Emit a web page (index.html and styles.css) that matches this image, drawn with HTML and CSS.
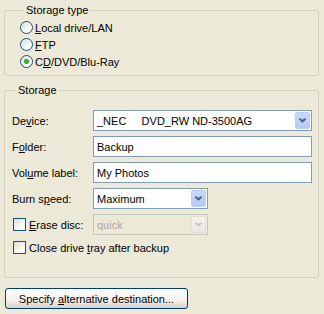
FILE: index.html
```html
<!DOCTYPE html>
<html lang="en">
<head>
  <meta charset="UTF-8" />
  <title>Backup destination</title>
  <link rel="stylesheet" href="styles.css">
</head>
<body>

  <fieldset class="group group-type">
    <legend>Storage type</legend>
    <label class="radio-row"><input type="radio" name="type" class="radio"/><span><u>L</u>ocal drive/LAN</span></label>
    <label class="radio-row"><input type="radio" name="type" class="radio"/><span><u>F</u>TP</span></label>
    <label class="radio-row"><input type="radio" name="type" class="radio" checked/><span>C<u>D</u>/DVD/Blu-Ray</span></label>
  </fieldset>

  <fieldset class="group group-storage">
    <legend>Storage</legend>
    <div class="form">
      <span class="label">De<u>v</u>ice:</span>
      <div class="combo">
        <span class="value">_NEC&nbsp;&nbsp;&nbsp;&nbsp; DVD_RW ND-3500AG</span>
        <span class="drop">
          <svg width="7" height="5" viewBox="0 0 7 5"><path d="M0 0.5h2l1.5 1.5 1.5-1.5h2v1l-3 3h-1l-3-3z" fill="#4d6185"/></svg>
        </span>
      </div>

      <span class="label">F<u>o</u>lder:</span>
      <input type="text" class="field" value="Backup"/>

      <span class="label">Vol<u>u</u>me label:</span>
      <input type="text" class="field" value="My Photos"/>

      <span class="label">Burn s<u>p</u>eed:</span>
      <div class="combo combo-short">
        <span class="value">Maximum</span>
        <span class="drop">
          <svg width="7" height="5" viewBox="0 0 7 5"><path d="M0 0.5h2l1.5 1.5 1.5-1.5h2v1l-3 3h-1l-3-3z" fill="#4d6185"/></svg>
        </span>
      </div>

      <label class="check-row"><input type="checkbox" class="check"/><span><u>E</u>rase disc:</span></label>
      <div class="combo combo-short disabled">
        <span class="value">quick</span>
        <span class="drop">
          <svg width="7" height="5" viewBox="0 0 7 5"><path d="M0 0.5h2l1.5 1.5 1.5-1.5h2v1l-3 3h-1l-3-3z" fill="#c9c7ba"/></svg>
        </span>
      </div>
    </div>

    <label class="check-row tray"><input type="checkbox" class="check"/><span>Close drive <u>t</u>ray after backup</span></label>
  </fieldset>

  <button class="btn">Specify <u>a</u>lternative destination...</button>

</body>
</html>
```

FILE: styles.css
```css
body {
  margin: 0;
  padding-top: 4px;
  background: #ece9d8;
  font-family: "Liberation Sans", Arial, sans-serif;
  font-size: 11px;
  color: #000;
}

u {
  text-decoration-thickness: 1px;
  text-underline-offset: 1px;
}

.group {
  margin: 0 5px 0 4px;
  padding: 0;
  border: 1px solid #d0d0bf;
  border-radius: 3px;
  min-width: 0;
}

.group legend {
  margin-left: 4px;
  padding: 0 2px;
  line-height: 13px;
}

.group-type {
  padding: 2px 6px 5px 15px;
}

.group-storage {
  margin-top: 8px;
  padding: 13px 6px 21px 7px;
}

.radio-row,
.check-row {
  display: flex;
  align-items: center;
  height: 17px;
}

.radio,
.check {
  appearance: none;
  margin: 0 3px 0 0;
  width: 13px;
  height: 13px;
  border: 1px solid #1c5180;
  background: linear-gradient(135deg, #dcdcd7, #fbfbf9 70%, #fff);
  flex: none;
}

.radio {
  margin-right: 2px;
  border-radius: 50%;
  border-color: #1c5180;
}

.radio:checked {
  background: radial-gradient(circle, #4ed24e 0, #21a121 2px, transparent 3px),
              linear-gradient(135deg, #dcdcd7, #fbfbf9 70%, #fff);
}

.check {
  margin-left: 1px;
}

.form {
  display: grid;
  grid-template-columns: 81px 1fr;
  row-gap: 5px;
  align-items: center;
}

.field,
.combo {
  box-sizing: border-box;
  height: 21px;
  border: 1px solid #7f9db9;
  background: #fff;
  font: inherit;
  margin: 0;
  padding: 0 3px;
  width: 100%;
}

.combo {
  display: flex;
  align-items: center;
  justify-content: space-between;
  padding-right: 1px;
}

.combo-short {
  width: 115px;
}

.drop {
  display: flex;
  align-items: center;
  justify-content: center;
  width: 15px;
  height: 17px;
  border-radius: 2px;
  background: linear-gradient(#c8d9fd, #b5c9f5);
  border: 1px solid #bacdf8;
  box-sizing: border-box;
}

.combo.disabled {
  border-color: #c9c7ba;
  background: #ece9d8;
  color: #aca899;
}

.combo.disabled .drop {
  background: linear-gradient(#f4f3ee, #e7e6df);
  border-color: #e2e0d6;
}

.tray {
  margin-top: 4px;
}

.btn {
  margin: 10px 0 0 5px;
  width: 183px;
  height: 21px;
  border: 1px solid #003c74;
  border-radius: 3px;
  background: linear-gradient(#fff, #f3f2ed 60%, #d6d0c5);
  font: inherit;
  color: #000;
  padding: 0;
}
```
